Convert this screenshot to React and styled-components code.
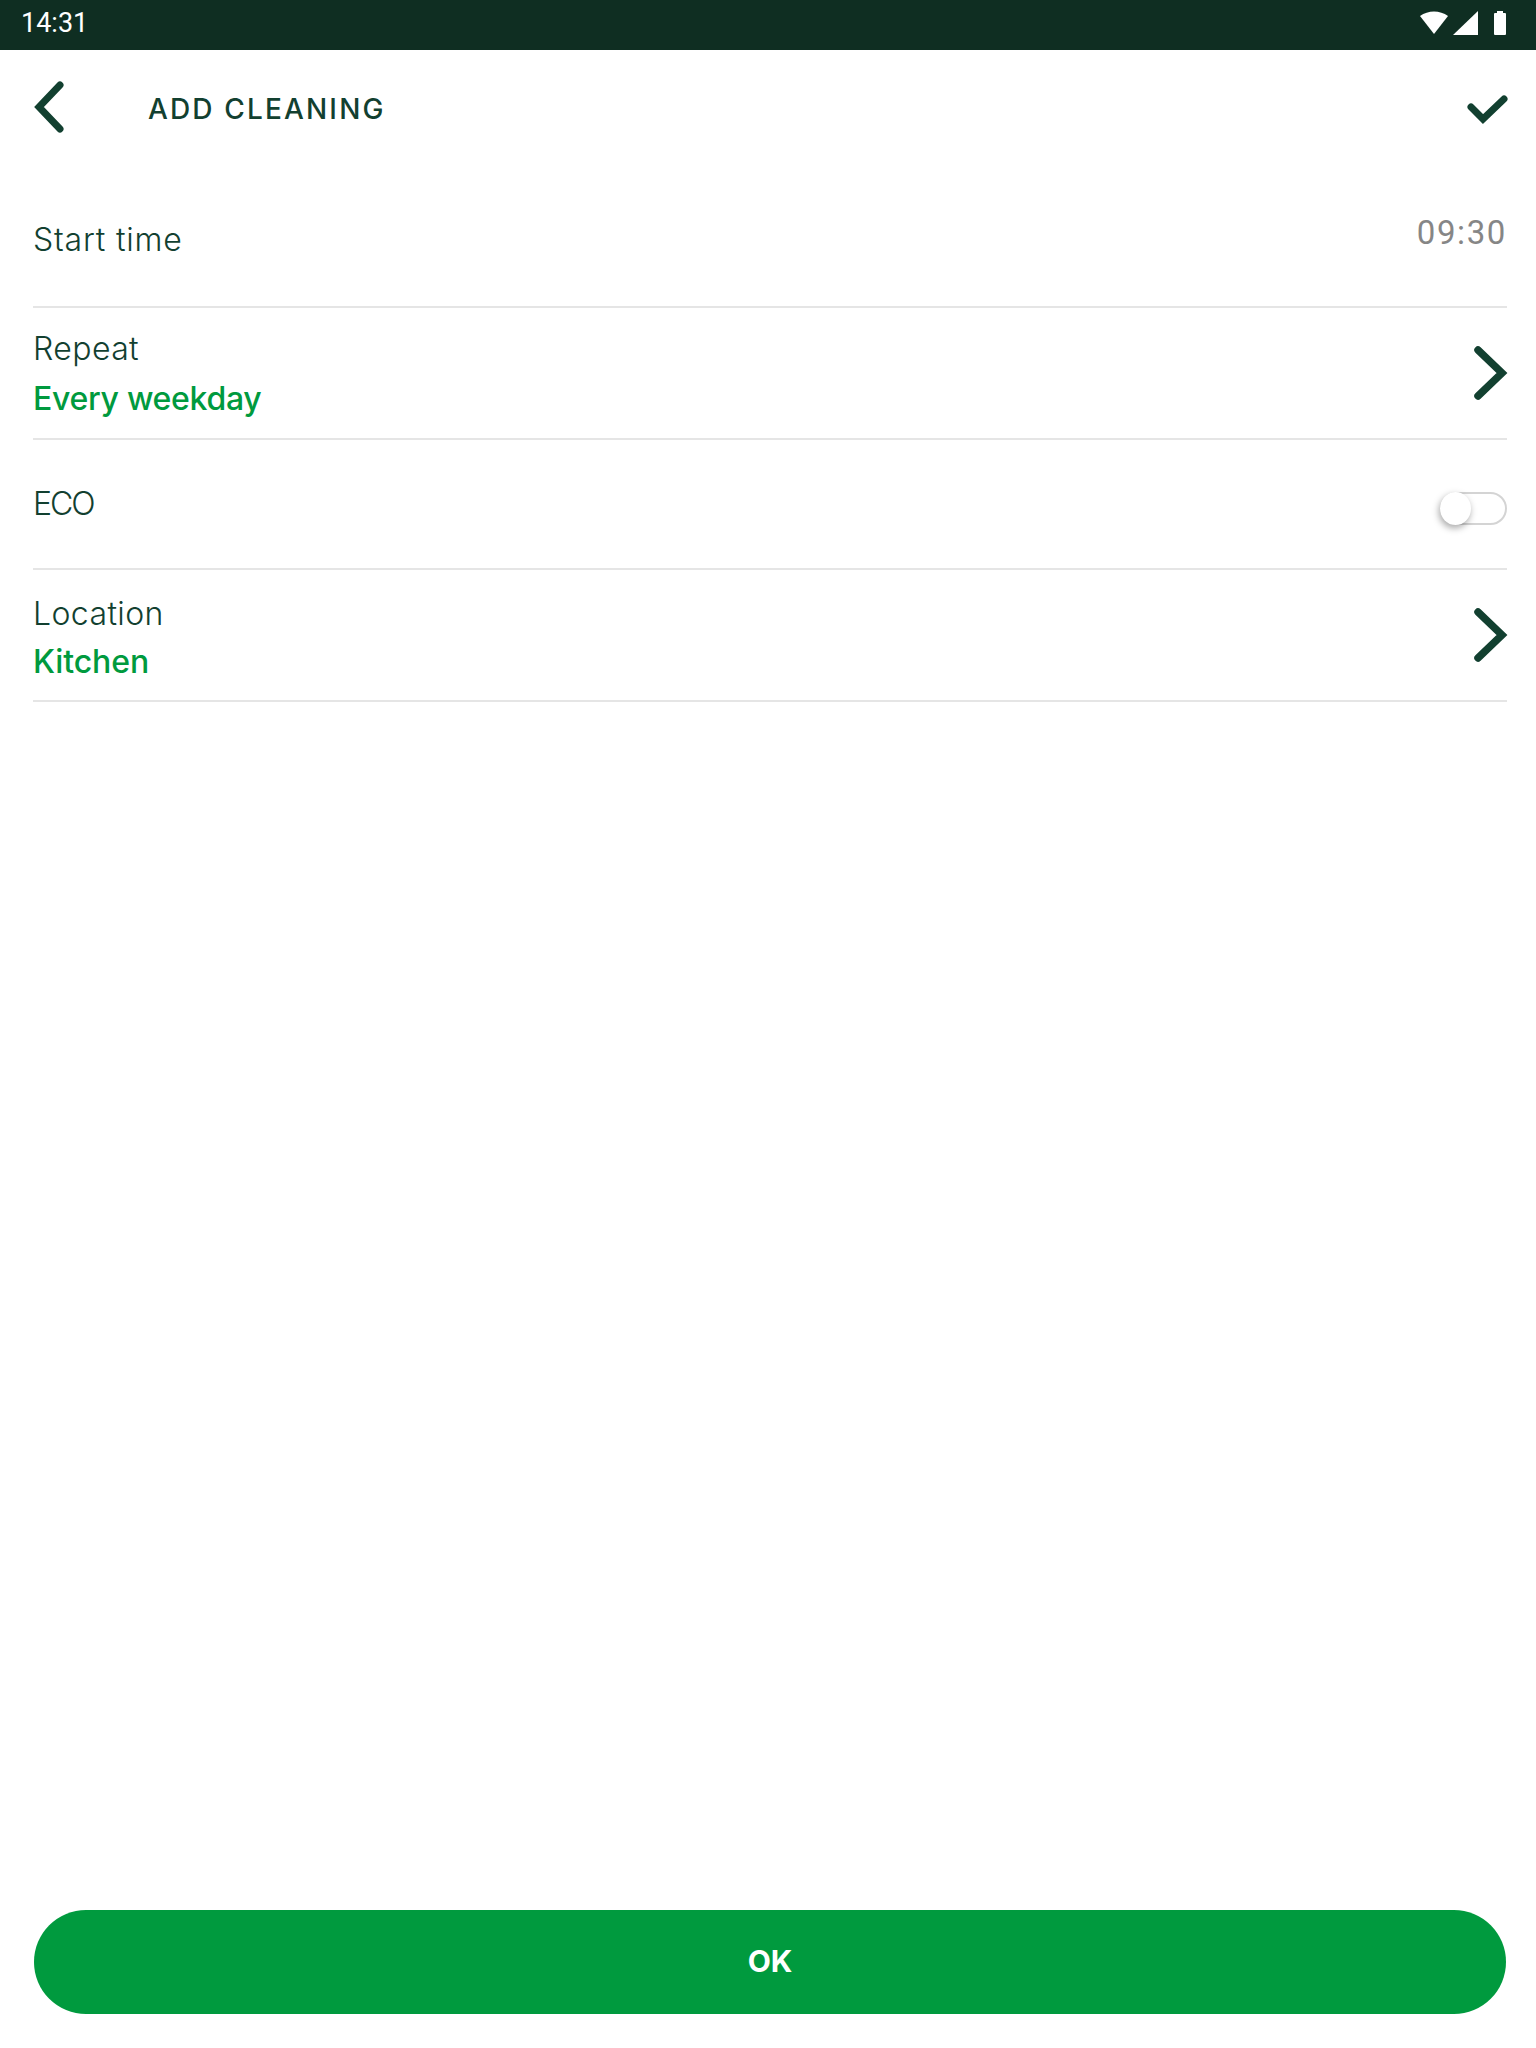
import React from "react";
import styled, { createGlobalStyle } from "styled-components";

const Global = createGlobalStyle`
  html, body { margin: 0; padding: 0; background: #fff; }
  * { box-sizing: border-box; }
`;

const Page = styled.div`
  width: 1536px;
  height: 2048px;
  display: flex;
  flex-direction: column;
  background: #fff;
  font-family: "Inter", "Noto Sans", sans-serif;
  color: #124030;
`;

const StatusBar = styled.div`
  height: 50px;
  flex: none;
  background: #0f2e22;
  display: flex;
  align-items: center;
  justify-content: space-between;
  padding: 0 29px 4px 21px;
  color: #fff;
`;

const Clock = styled.span`
  font-family: Roboto, sans-serif;
  font-size: 27px;
  line-height: 32px;
`;

const StatusIcons = styled.div`
  display: flex;
  align-items: center;
`;

const SignalIcon = styled.svg`
  margin-left: 3px;
`;

const BatteryIcon = styled.svg`
  margin-left: 13px;
`;

const Header = styled.header`
  height: 102px;
  flex: none;
  display: flex;
  align-items: center;
  padding: 0 28px 0 32px;
`;

const BackIcon = styled.svg`
  margin-top: 11px;
`;

const CheckIcon = styled.svg`
  margin-top: 17px;
`;

const Title = styled.h1`
  margin: 0 0 0 84px;
  flex: 1;
  font-size: 28px;
  font-weight: 500;
  letter-spacing: 2.15px;
  line-height: 34px;
  padding-top: 16px;
`;

const List = styled.div`
  flex: none;
  display: flex;
  flex-direction: column;
  margin: 0 29px 0 33px;
`;

const Row = styled.div`
  height: ${(p) => p.$h}px;
  padding-top: ${(p) => p.$top || 0}px;
  flex: none;
  display: flex;
  align-items: center;
  justify-content: space-between;
  border-bottom: 2px solid #e5e5e5;
`;

const Labels = styled.div`
  display: flex;
  flex-direction: column;
  gap: ${(p) => p.$gap}px;
`;

const Label = styled.div`
  font-size: 32px;
  font-weight: 300;
  line-height: 38px;
  letter-spacing: ${(p) => p.$spacing ?? 0.4}px;
`;

const Value = styled.div`
  font-size: 32px;
  line-height: 38px;
  font-weight: 500;
  letter-spacing: ${(p) => p.$spacing ?? -0.3}px;
  color: #009a3e;
`;

const TimeValue = styled.div`
  font-family: Roboto, sans-serif;
  font-size: 33px;
  line-height: 38px;
  letter-spacing: 1.6px;
  color: #868686;
  margin-bottom: 14px;
`;

const Toggle = styled.div`
  position: relative;
  width: 67px;
  height: 33px;
  margin-top: 8px;
  border: 2px solid #d4d4d4;
  border-radius: 17px;
  background: #fff;
`;

const Knob = styled.div`
  position: absolute;
  left: -2px;
  top: -2px;
  width: 31px;
  height: 33px;
  border-radius: 50%;
  background: #fff;
  box-shadow: -1px 3px 7px rgba(0, 0, 0, 0.35);
`;

const Spacer = styled.div`
  flex: 1;
`;

const Footer = styled.div`
  flex: none;
  padding: 0 30px 34px 34px;
`;

const OkButton = styled.button`
  width: 100%;
  height: 104px;
  padding: 0 0 2px;
  border: 0;
  border-radius: 52px;
  background: #009a3e;
  color: #fff;
  font-family: "Inter", sans-serif;
  font-size: 30px;
  font-weight: 700;
`;

const ChevronIcon = styled.svg`
  margin-right: -1px;
  transform: translateY(${(p) => p.$shift || 0}px);
`;

const Chevron = ({ shift }) => (
  <ChevronIcon $shift={shift} width="34" height="54" viewBox="0 0 34 54" fill="none">
    <path d="M4 4 L28 27 L4 50" stroke="#124030" strokeWidth="7.5" strokeLinecap="round" strokeLinejoin="miter" />
  </ChevronIcon>
);

export default function App() {
  return (
    <Page>
      <Global />
      <StatusBar>
        <Clock>14:31</Clock>
        <StatusIcons>
          <svg width="30" height="26" viewBox="0 0 30 26"><path d="M1 6 C9 0 21 0 29 6 L15 24 Z" fill="#fff" /></svg>
          <SignalIcon width="28" height="26" viewBox="0 0 28 26"><path d="M26 1 V25 H1 Z" fill="#fff" /></SignalIcon>
          <BatteryIcon width="14" height="26" viewBox="0 0 14 26"><path d="M4 3 V1 H10 V3 H12 a1 1 0 0 1 1 1 V24 a1 1 0 0 1 -1 1 H2 a1 1 0 0 1 -1 -1 V4 a1 1 0 0 1 1 -1 Z" fill="#fff" /></BatteryIcon>
        </StatusIcons>
      </StatusBar>
      <Header>
        <BackIcon width="32" height="52" viewBox="0 0 32 52" fill="none">
          <path d="M28 4 L7 26 L28 48" stroke="#124030" strokeWidth="7" strokeLinecap="round" strokeLinejoin="miter" />
        </BackIcon>
        <Title>ADD CLEANING</Title>
        <CheckIcon width="42" height="32" viewBox="0 0 42 32" fill="none">
          <path d="M5 13 L17 25 L38 5" stroke="#124030" strokeWidth="7" strokeLinecap="round" strokeLinejoin="miter" />
        </CheckIcon>
      </Header>
      <List>
        <Row $h={156} $top={22}>
          <Label $spacing={0.8}>Start time</Label>
          <TimeValue>09:30</TimeValue>
        </Row>
        <Row $h={132} $top={2}>
          <Labels $gap={12}>
            <Label>Repeat</Label>
            <Value>Every weekday</Value>
          </Labels>
          <Chevron shift={-1} />
        </Row>
        <Row $h={130}>
          <Label $spacing={-2}>ECO</Label>
          <Toggle><Knob /></Toggle>
        </Row>
        <Row $h={132} $top={6}>
          <Labels $gap={10}>
            <Label>Location</Label>
            <Value $spacing={-0.1}>Kitchen</Value>
          </Labels>
          <Chevron shift={-3} />
        </Row>
      </List>
      <Spacer />
      <Footer>
        <OkButton>OK</OkButton>
      </Footer>
    </Page>
  );
}
